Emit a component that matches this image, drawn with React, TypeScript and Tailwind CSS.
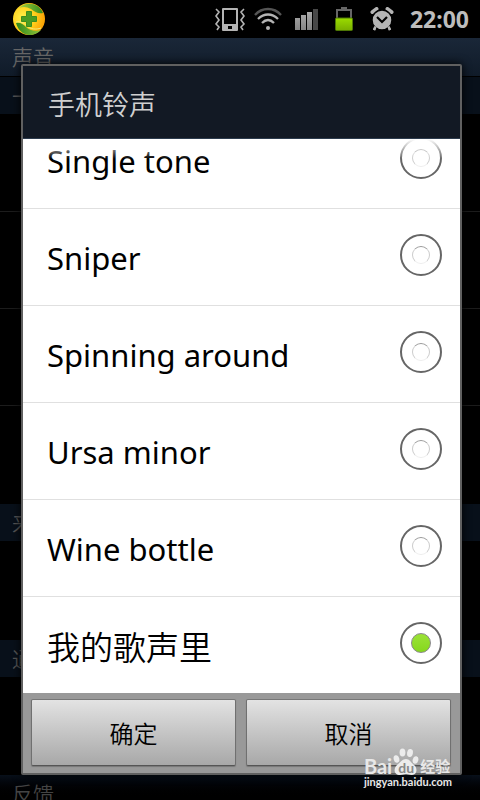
import React, { useState } from "react";

const FONT = "font-['Noto_Sans','Noto_Sans_CJK_SC',sans-serif]";
const CJK = "font-['Noto_Sans_CJK_SC',sans-serif] font-[350]";

const RINGTONES = [
  { name: "Single tone" },
  { name: "Sniper" },
  { name: "Spinning around" },
  { name: "Ursa minor" },
  { name: "Wine bottle" },
  { name: "我的歌声里", chinese: true },
];

function ShieldIcon() {
  return (
    <svg className="h-8 w-8" viewBox="0 0 32 32" aria-hidden="true">
      <defs>
        <radialGradient id="ball" cx="0.3" cy="0.45" r="0.75">
          <stop offset="0" stopColor="#fff04a" />
          <stop offset="0.5" stopColor="#ffd01c" />
          <stop offset="1" stopColor="#f99800" />
        </radialGradient>
        <linearGradient id="leaf" x1="0" y1="0" x2="1" y2="0">
          <stop offset="0" stopColor="#a9cf3e" />
          <stop offset="1" stopColor="#2f8a1c" />
        </linearGradient>
        <linearGradient id="leaf2" x1="0" y1="0" x2="1" y2="0">
          <stop offset="0" stopColor="#2f8a1c" />
          <stop offset="1" stopColor="#8fc23a" />
        </linearGradient>
      </defs>
      <circle cx="16" cy="16" r="16" fill="url(#ball)" />
      <path d="M6 5C13-2 26 0 30 10c-5 1-8-1-12-4-4-2-7-3-12-1z" fill="url(#leaf)" />
      <path d="M3 20c4-1 7 1 10 4s9 5 15 3C21 35 7 34 3 20z" fill="url(#leaf2)" />
      <path d="M3 19c5-1 8 1 11 4s9 4 14 2" fill="none" stroke="#f0ef7c" strokeWidth="1" />
      <path d="M13.500 8.500h5v5h5v5h-5v5h-5v-5h-5v-5h5z" fill="#4a9c22" stroke="#3c8c1e" strokeLinejoin="round" />
    </svg>
  );
}

function VibrateIcon() {
  return (
    <svg className="h-6 w-8" viewBox="0 0 32 24" aria-hidden="true">
      <path d="M9 1h14a1 1 0 0 1 1 1v21a1 1 0 0 1-1 1H9a1 1 0 0 1-1-1V2a1 1 0 0 1 1-1zM10 3v14h12V3zM14 19v3h4v-3z" fill="#b4b4b4" fillRule="evenodd" />
      <path d="M2 2l3 3-3 4 3 4-3 4 3 3-2 3M30 2l-3 3 3 4-3 4 3 4-3 3 2 3" fill="none" stroke="#b4b4b4" strokeWidth="1.6" />
    </svg>
  );
}

function WifiIcon() {
  return (
    <svg className="h-6 w-7" viewBox="0 0 28 24" fill="none" strokeWidth="2.3" aria-hidden="true">
      <path d="M1 8c7-8 19-8 26 0" stroke="#555" />
      <path d="M4 12c6-6 14-6 20 0M8 16c4-4 8-4 12 0" stroke="#b4b4b4" />
      <circle cx="14" cy="21" r="2" fill="#b4b4b4" />
    </svg>
  );
}

function SignalIcon() {
  return (
    <svg className="h-6 w-6" viewBox="0 0 24 24" aria-hidden="true">
      <defs>
        <linearGradient id="bars" x1="0" y1="0" x2="0" y2="1">
          <stop offset="0" stopColor="#aaa" />
          <stop offset="1" stopColor="#858585" />
        </linearGradient>
      </defs>
      <path d="M1 11h5v12H1zM7 8h5v15H7zM13 5h5v18h-5z" fill="url(#bars)" />
      <path d="M19 2h5v21h-5z" fill="#484848" />
    </svg>
  );
}

function BatteryIcon() {
  return (
    <svg className="h-6 w-5" viewBox="0 0 20 24" aria-hidden="true">
      <defs>
        <linearGradient id="charge" x1="0" y1="0" x2="0" y2="1">
          <stop offset="0" stopColor="#9bdc00" />
          <stop offset="1" stopColor="#79ae00" />
        </linearGradient>
      </defs>
      <path d="M3 12V3h14v9" fill="none" stroke="#666" strokeWidth="2" />
      <path d="M7 0h6v3H7z" fill="#666" />
      <rect x="1.500" y="11" width="17" height="12.500" rx="1" fill="url(#charge)" stroke="#4d7605" />
    </svg>
  );
}

function AlarmIcon() {
  return (
    <svg className="h-6 w-6" viewBox="0 0 24 24" aria-hidden="true">
      <path d="M2.500 5L6.500 2M21.500 5l-4-3" fill="none" stroke="#b4b4b4" strokeWidth="4" strokeLinecap="round" />
      <path d="M6 19l-2 4M18 19l2 4" stroke="#b4b4b4" strokeWidth="2.4" />
      <circle cx="12" cy="13" r="10" fill="#b4b4b4" stroke="#000" strokeWidth="1.4" />
      <path d="M5.500 19.500L4 23M18.500 19.500L20 23" stroke="#b4b4b4" strokeWidth="2.4" />
      <path d="M7 10l5 5 5-5" fill="none" stroke="#000" strokeWidth="2.2" />
    </svg>
  );
}

function PawIcon() {
  return (
    <svg className="h-7 w-7" viewBox="0 0 28 28" fill="#ececec" aria-hidden="true">
      <ellipse cx="4.500" cy="11" rx="2.800" ry="3.800" transform="rotate(-15 4.500 11)" />
      <ellipse cx="10.500" cy="4.500" rx="2.900" ry="4" />
      <ellipse cx="18" cy="5" rx="2.900" ry="4" transform="rotate(10 18 5)" />
      <ellipse cx="23.500" cy="12" rx="2.800" ry="3.800" transform="rotate(15 23.500 12)" />
      <path d="M14 11c4 0 5 4 8 6 4 3 3 10-2 10-3 0-4-1-6-1s-3 1-6 1c-6 0-7-6-3-10 3-2 5-6 9-6z" />
    </svg>
  );
}

function Section({ label }: { label: string }) {
  return (
    <h2 className={`${CJK} h-[38px] border-t border-black bg-[#08101a] pl-3 text-[21px] leading-9 text-[#555]`}>
      {label}
    </h2>
  );
}

function SettingsScreen() {
  return (
    <div className="flex min-h-screen flex-col bg-black">
      <header className="flex h-[38px] items-center justify-between pr-[11px] pl-[13px]">
        <ShieldIcon />
        <div className="flex items-center">
          <VibrateIcon />
          <span className="ml-2"><WifiIcon /></span>
          <span className="ml-3"><SignalIcon /></span>
          <span className="ml-4"><BatteryIcon /></span>
          <span className="ml-4"><AlarmIcon /></span>
          <time className="ml-4 font-['Noto_Sans',sans-serif] text-[23px] leading-8 font-bold text-[#bdbdbd]">22:00</time>
        </div>
      </header>
      <h1 className={`${CJK} h-[38px] bg-linear-to-b from-[#1a2738] to-[#101b29] pl-3 text-[21px] leading-9 text-[#666]`}>
        声音
      </h1>
      <Section label="一般" />
      <div className="h-[98px] border-b border-[#1c1c1c]" />
      <div className="h-[97px] border-b border-[#1c1c1c]" />
      <div className="h-[97px] border-b border-[#1c1c1c]" />
      <div className="h-[97px]" />
      <Section label="来电" />
      <div className="h-[98px]" />
      <Section label="通知" />
      <div className="h-[98px]" />
      <h2 className={`${CJK} h-[25px] overflow-hidden bg-linear-to-b from-[#08101a] to-black pl-3 text-[21px] leading-9 text-[#444]`}>
        反馈
      </h2>
    </div>
  );
}

type ToneRowProps = { name: string; chinese?: boolean; checked: boolean; onSelect: () => void };

function ToneRow({ name, chinese, checked, onSelect }: ToneRowProps) {
  return (
    <label className="flex h-[97px] shrink-0 items-center justify-between border-b border-[#e0e0e0] pr-[18px] pb-1 pl-6 text-black last:h-24 last:border-b-0">
      <span className={chinese ? `${CJK} pt-[6px] text-[33px] leading-10` : "pt-[6px] text-[31px] leading-10"}>{name}</span>
      <input
        type="radio"
        name="ringtone"
        checked={checked}
        onChange={onSelect}
        className="grid size-[42px] appearance-none place-items-center rounded-full border-2 border-[#666] bg-white before:size-[18px] before:rounded-full before:border before:border-t-[#999] before:border-r-[#ccc] before:border-b-[#eee] before:border-l-[#ccc] before:content-[''] checked:before:size-5 checked:before:border checked:before:border-[#888] checked:before:bg-linear-to-b checked:before:from-[#9be236] checked:before:to-[#86d81c]"
      />
    </label>
  );
}

function DialogButton({ children }: { children: React.ReactNode }) {
  return (
    <button
      type="button"
      className={`${CJK} flex-1 rounded-xs border border-t-[#777] border-r-[#707070] border-b-[#555] border-l-[#707070] bg-linear-to-b from-[#e3e3e3] to-[#a8a8a8] text-2xl text-black shadow-[0_1px_1px_#777]`}
    >
      {children}
    </button>
  );
}

function Watermark() {
  return (
    <div className="absolute right-7 bottom-3 flex flex-col items-start font-['Lato','Noto_Sans_CJK_SC',sans-serif] text-[#e8e8e8]">
      <div className="flex items-end">
        <span className="text-xl leading-5 font-bold">Bai</span>
        <span className="relative flex">
          <PawIcon />
          <span className="absolute inset-x-0 bottom-0 text-center text-sm leading-4 font-bold text-[#888]">du</span>
        </span>
        <span className="text-[15px] leading-5 font-bold">经验</span>
      </div>
      <span className="text-[11px] leading-3 font-bold">jingyan.baidu.com</span>
    </div>
  );
}

export default function App() {
  const [selected, setSelected] = useState(5);
  return (
    <div className={`${FONT} relative min-h-screen overflow-hidden`}>
      <SettingsScreen />
      <div
        role="dialog"
        aria-labelledby="dialog-title"
        className="absolute top-16 right-[18px] bottom-[25px] left-[21px] flex flex-col rounded-xs border-2 border-[#606060] bg-white shadow-[0_0_10px_#000]"
      >
        <h2 id="dialog-title" className={`${CJK} h-[73px] shrink-0 border-b border-[#2c3b4d] bg-[#121924] pl-[25px] text-[27px] leading-[76px] text-[#d0d0d0]`}>
          手机铃声
        </h2>
        <div className="relative flex min-h-0 flex-1 flex-col justify-end overflow-hidden">
          <div className="pointer-events-none absolute inset-x-0 top-0 z-10 h-5 bg-linear-to-b from-white to-transparent" />
          {RINGTONES.map((tone, i) => (
            <ToneRow key={tone.name} {...tone} checked={i === selected} onSelect={() => setSelected(i)} />
          ))}
        </div>
        <div className="flex h-20 shrink-0 gap-[10px] bg-[#999] pt-[6px] pr-[9px] pb-[7px] pl-2">
          <DialogButton>确定</DialogButton>
          <DialogButton>取消</DialogButton>
        </div>
      </div>
      <Watermark />
    </div>
  );
}
